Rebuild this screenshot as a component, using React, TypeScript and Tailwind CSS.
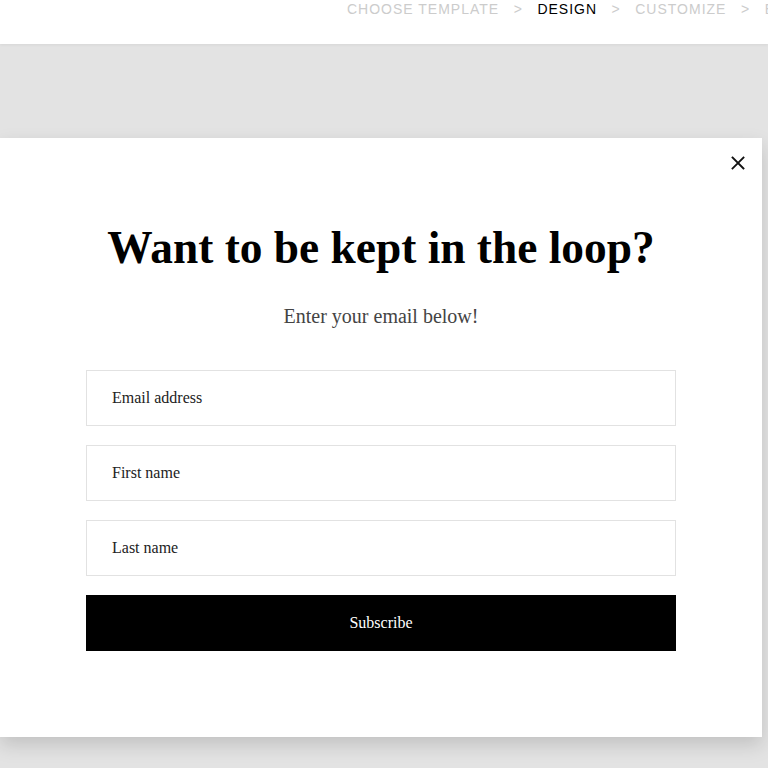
import React from "react";

export default function App() {
  const serif = { fontFamily: '"Liberation Serif", "Times New Roman", serif' };
  return (
    <div className="w-[768px] h-[768px] overflow-hidden bg-[#e3e3e3] relative">
      <header
        className="h-[44px] bg-white flex items-start pl-[347px] gap-[14.5px] text-[14px] leading-[18px] tracking-[1px] whitespace-nowrap shadow-[0_1px_3px_rgba(0,0,0,0.06)] relative z-10"
        style={{ fontFamily: '"Liberation Sans", Arial, sans-serif' }}
      >
        <span className="text-[#cccccc]">CHOOSE TEMPLATE</span>
        <span className="text-[#cccccc]">&gt;</span>
        <span className="text-[#000000]">DESIGN</span>
        <span className="text-[#cccccc]">&gt;</span>
        <span className="text-[#cccccc]">CUSTOMIZE</span>
        <span className="text-[#cccccc]">&gt;</span>
        <span className="text-[#cccccc]">EXPORT</span>
      </header>
      <div className="pt-[94px]">
        <div
          className="relative w-[762px] h-[599px] bg-white shadow-[0_8px_18px_rgba(0,0,0,0.15)] flex flex-col items-center pt-[83px]"
          style={serif}
        >
          <button className="absolute right-[17px] top-[18px] w-[14px] h-[14px] flex items-center justify-center">
            <svg width="14" height="14" viewBox="0 0 14 14">
              <path d="M1.5 1.5 L12.5 12.5 M12.5 1.5 L1.5 12.5" stroke="#111" strokeWidth="1.8" strokeLinecap="square" fill="none" />
            </svg>
          </button>
          <h1 className="text-[45.4px] leading-[54px] font-bold text-black">Want to be kept in the loop?</h1>
          <p className="mt-[27px] text-[20px] leading-[28px] text-[#444444]">Enter your email below!</p>
          <div className="mt-[40px] w-[590px] flex flex-col gap-[19px]">
            {["Email address", "First name", "Last name"].map((p) => (
              <input
                key={p}
                placeholder={p}
                className="h-[56px] w-full border border-[#e2e2e2] px-[25px] text-[16px] text-[#222] placeholder:text-[#222] outline-none"
                style={serif}
              />
            ))}
            <button className="h-[56px] w-full bg-black text-white text-[16px]" style={serif}>
              Subscribe
            </button>
          </div>
        </div>
      </div>
    </div>
  );
}
